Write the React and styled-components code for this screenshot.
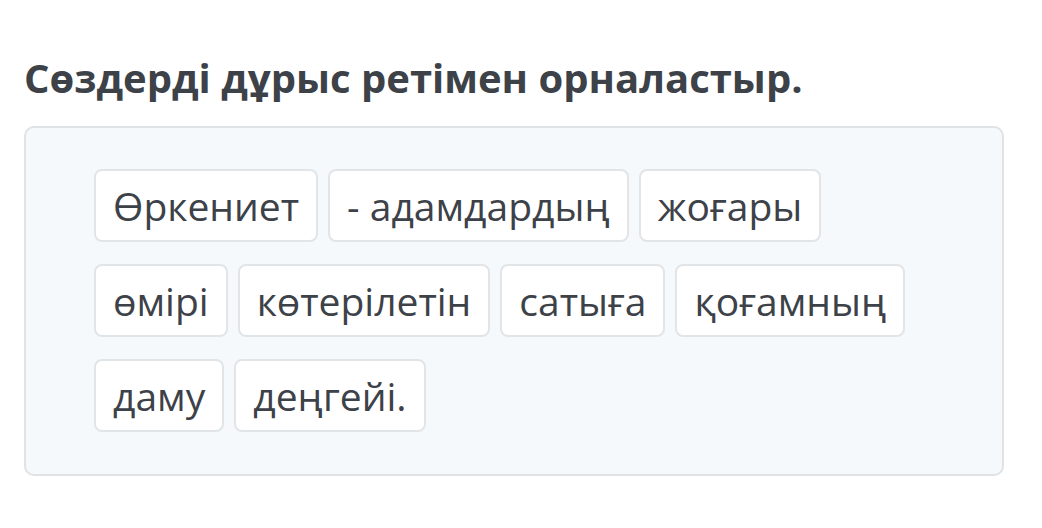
import styled, {createGlobalStyle} from "styled-components";

const GlobalStyle = createGlobalStyle`
    body {
        margin: 0;
        background: #ffffff;
        font-family: "Open Sans", "Noto Sans", sans-serif;
    }
`;

const Page = styled.div`
    padding: 53px 38px 0 24px;
`;

const Title = styled.h2`
    margin: 0 0 23px;
    font-size: 40px;
    font-weight: 700;
    line-height: 50px;
    color: #3d4148;
`;

const Board = styled.div`
    display: flex;
    flex-wrap: wrap;
    gap: 22px 10px;
    padding: 41px 68px 42px;
    background: #f5f9fc;
    border: 2px solid #dfe3e6;
    border-radius: 10px;
`;

const Word = styled.div`
    display: flex;
    align-items: center;
    height: 73px;
    box-sizing: border-box;
    padding: 0 17px;
    background: #ffffff;
    border: 2px solid #e2e5e8;
    border-radius: 8px;
    font-size: 39px;
    color: #3d4148;
    white-space: nowrap;
`;

const words = ['Өркениет', '- адамдардың', 'жоғары', 'өмірі', 'көтерілетін', 'сатыға', 'қоғамның', 'даму', 'деңгейі.'];

export default function App() {
    return (
        <Page>
            <GlobalStyle />
            <Title>Сөздерді дұрыс ретімен орналастыр.</Title>
            <Board>
                {words.map((w, i) => (
                    <Word key={i}>{w}</Word>
                ))}
            </Board>
        </Page>
    );
}
